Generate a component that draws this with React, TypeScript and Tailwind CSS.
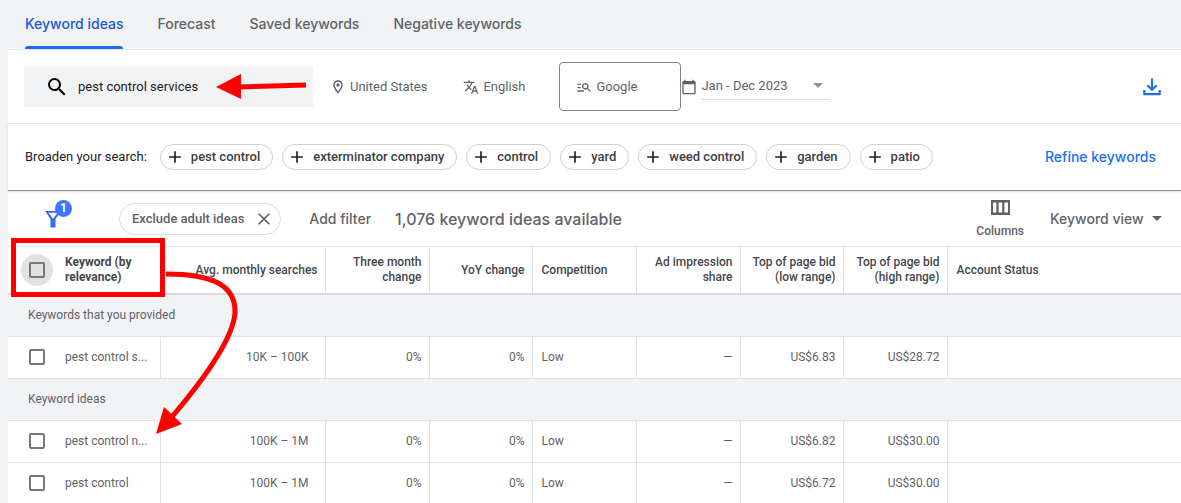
import type { ReactNode } from "react";
import {
  MdAdd,
  MdArrowDropDown,
  MdCalendarToday,
  MdClose,
  MdManageSearch,
  MdOutlineLocationOn,
  MdSearch,
  MdTranslate,
} from "react-icons/md";

const tabs = ["Keyword ideas", "Forecast", "Saved keywords", "Negative keywords"];

const suggestions = [
  "pest control",
  "exterminator company",
  "control",
  "yard",
  "weed control",
  "garden",
  "patio",
];

type Row = { keyword: string; searches: string; low: string; high: string };

const provided: Row[] = [
  { keyword: "pest control s...", searches: "10K – 100K", low: "US$6.83", high: "US$28.72" },
];

const ideas: Row[] = [
  { keyword: "pest control n...", searches: "100K – 1M", low: "US$6.82", high: "US$30.00" },
  { keyword: "pest control", searches: "100K – 1M", low: "US$6.72", high: "US$30.00" },
];

function Checkbox({ label }: { label: string }) {
  return (
    <input
      type="checkbox"
      aria-label={label}
      className="size-4 shrink-0 appearance-none rounded-xs border-2 border-[#75787c] checked:bg-[#1a73e8]"
    />
  );
}

function Setting({ icon, children }: { icon: ReactNode; children: ReactNode }) {
  return (
    <button type="button" className="flex items-center gap-1 text-[13px] text-[#5f6368]">
      {icon}
      {children}
    </button>
  );
}

function DownloadIcon() {
  return (
    <svg viewBox="0 0 18 18" className="size-[18px]" fill="none" stroke="currentColor" strokeWidth="2.2">
      <path d="M9 0.5v11M4.3 7.2 9 11.7l4.7-4.5" />
      <path d="M1.3 12v4.2h15.4V12" strokeLinejoin="round" />
    </svg>
  );
}

function FunnelIcon() {
  return (
    <svg viewBox="0 0 17 18" className="h-[18px] w-[17px]" fill="currentColor">
      <path fillRule="evenodd" d="M0 1h16L10.5 9V17.5H5.5V9ZM3.4 2.8 8 8.8l4.6-6Z" />
    </svg>
  );
}

function ColumnsIcon() {
  return (
    <svg viewBox="0 0 19 15" className="h-[15px] w-[19px]" fill="currentColor">
      <path fillRule="evenodd" d="M0 0h19v15H0ZM2 2.4v10.2h3.4V2.4ZM7.6 2.4v10.2h3.6V2.4ZM13.4 2.4v10.2H17V2.4Z" />
    </svg>
  );
}

function HeadCell({ children, left }: { children: ReactNode; left?: boolean }) {
  return (
    <th
      scope="col"
      className={
        "border-r border-[#e0e1e6] pl-[9px] pr-[7px] font-medium last:border-r-0 " +
        (left ? "text-left" : "text-right")
      }
    >
      {children}
    </th>
  );
}

function GroupRow({ title }: { title: string }) {
  return (
    <tr className="h-[42px] border-b border-[#e0e2e6] bg-[#f1f3f4]">
      <th colSpan={9} scope="rowgroup" className="pl-5 text-left font-normal">
        {title}
      </th>
    </tr>
  );
}

function DataRow({ row }: { row: Row }) {
  const cell = "border-r border-[#e0e1e6] pl-[9px] pr-[7px] text-right";
  return (
    <tr className="h-[42px] border-b border-[#e0e2e6] last:border-b-0">
      <td className="border-r border-[#e0e1e6] pl-[21px]">
        <div className="flex items-center gap-5">
          <Checkbox label={row.keyword} />
          <span className="whitespace-nowrap">{row.keyword}</span>
        </div>
      </td>
      <td className="border-r border-[#e0e1e6] pr-4 text-right">{row.searches}</td>
      <td className={cell}>0%</td>
      <td className={cell}>0%</td>
      <td className="border-r border-[#e0e1e6] pl-[9px] pr-[7px]">Low</td>
      <td className={cell}>—</td>
      <td className={cell}>{row.low}</td>
      <td className={cell}>{row.high}</td>
      <td />
    </tr>
  );
}

function Annotations() {
  return (
    <svg
      viewBox="0 0 320 450"
      className="pointer-events-none absolute left-0 top-0 h-[450px] w-[320px]"
      fill="none"
      stroke="#ff0000"
      strokeWidth="5"
      aria-hidden="true"
    >
      <rect x="13.5" y="240.5" width="149" height="54" />
      <path d="M306 85 238 87" />
      <path d="M216 87 241 74v25Z" fill="#ff0000" stroke="none" />
      <path d="M166 274C212 274 236 285 235 313C233 338 205 378 171 418" />
      <path d="M156 434 164 407 182 424Z" fill="#ff0000" stroke="none" />
    </svg>
  );
}

export default function App() {
  return (
    <div className="relative overflow-hidden bg-[#f1f3f4] pl-2 font-[family-name:Roboto,sans-serif] text-[#5f6368]">
      <nav className="flex gap-[34px] border-b border-[#e8eaed] pl-[17px] font-[family-name:Inter,sans-serif]">
        {tabs.map((tab, i) => (
          <button
            key={tab}
            type="button"
            className={
              "flex h-[49px] flex-col items-center text-sm font-medium " +
              (i === 0 ? "text-[#1a56db]" : "text-[#5f6368]")
            }
          >
            <span className="grow pt-[14px]">{tab}</span>
            {i === 0 && <span className="h-[3px] w-full rounded-t-sm bg-[#1a6af0]" />}
          </button>
        ))}
      </nav>

      <section className="flex h-[74px] items-center border-b border-[#e3e4e8] bg-white pl-4 pr-5">
        <label className="flex h-[41px] w-[289px] items-center gap-[9px] bg-[#f1f3f4] pl-[21px]">
          <MdSearch className="size-6 text-black" />
          <input
            type="text"
            aria-label="Keywords"
            defaultValue="pest control services"
            className="min-w-0 grow bg-transparent text-[13px] text-[#202124] outline-none"
          />
        </label>
        <div className="ml-[17px] flex items-center">
          <Setting icon={<MdOutlineLocationOn className="size-4" />}>United States</Setting>
          <div className="ml-9">
            <Setting icon={<MdTranslate className="size-4" />}>English</Setting>
          </div>
          <div className="ml-[34px] flex h-[49px] w-[122px] items-center rounded-sm border border-[#80868b] pl-4">
            <Setting icon={<MdManageSearch className="size-4" />}>Google</Setting>
          </div>
          <MdCalendarToday className="size-4" />
          <div className="relative ml-1 border-b border-[#dadce0]">
            <select
              aria-label="Date range"
              className="h-[26px] w-[129px] appearance-none bg-transparent text-[13px] outline-none"
            >
              <option>Jan - Dec 2023</option>
            </select>
            <MdArrowDropDown className="pointer-events-none absolute right-0 top-0 size-6 text-[#8d9094]" />
          </div>
        </div>
        <button type="button" aria-label="Download" className="ml-auto text-[#1a6ef5]">
          <DownloadIcon />
        </button>
      </section>

      <section className="relative flex h-[67px] items-center gap-[9px] border-b border-[#8f9195] bg-white pl-[17px] pr-[25px] shadow-sm">
        <span className="mr-1 text-[13px] text-[#202124]">Broaden your search:</span>
        {suggestions.map((s) => (
          <button
            key={s}
            type="button"
            className="flex h-[26px] items-center gap-[6px] rounded-full border border-[#cfd1d8] pl-1 pr-3 text-[13px] font-medium text-[#3c4043]"
          >
            <MdAdd className="size-5 text-[#202124]" />
            {s}
          </button>
        ))}
        <button
          type="button"
          className="ml-auto text-sm font-[family-name:Inter,sans-serif] font-medium text-[#1a6ef5]"
        >
          Refine keywords
        </button>
      </section>

      <section className="flex h-14 items-center border-b border-[#e3e4e8] bg-white pl-[37px] pr-4">
        <button type="button" aria-label="Filters, 1 applied" className="relative text-[#2f6df6]">
          <FunnelIcon />
          <span className="absolute -top-[10px] left-[10px] size-[17px] rounded-full bg-[#3c78ff] text-center text-xs font-bold leading-[17px] text-white">
            1
          </span>
        </button>
        <button
          type="button"
          className="ml-[57px] flex h-8 items-center gap-[10px] rounded-full border border-[#dadce0] pl-3 pr-[6px] text-[13px] font-medium"
        >
          Exclude adult ideas
          <MdClose className="size-5" />
        </button>
        <button type="button" className="ml-7 text-sm font-[family-name:Inter,sans-serif] font-medium">
          Add filter
        </button>
        <p className="ml-6 text-base font-[family-name:Inter,sans-serif] font-medium leading-5">
          1,076 keyword ideas available
        </p>
        <button
          type="button"
          className="ml-auto flex flex-col items-center gap-[10px] text-xs font-medium leading-3"
        >
          <ColumnsIcon />
          Columns
        </button>
        <div className="relative ml-[26px] font-[family-name:Inter,sans-serif]">
          <select
            aria-label="View"
            className="block h-6 w-[115px] appearance-none bg-transparent text-sm font-medium outline-none"
          >
            <option>Keyword view</option>
          </select>
          <MdArrowDropDown className="pointer-events-none absolute -right-1 -top-px size-6" />
        </div>
      </section>

      <table className="w-full table-fixed border-collapse bg-white text-xs">
        <colgroup>
          <col className="w-[152px]" />
          <col className="w-[165px]" />
          <col className="w-[104px]" />
          <col className="w-[103px]" />
          <col className="w-[104px]" />
          <col className="w-[104px]" />
          <col className="w-[103px]" />
          <col className="w-[104px]" />
          <col />
        </colgroup>
        <thead>
          <tr className="h-[47px] border-b-2 border-[#dadce3] leading-[15px] text-[#45484c]">
            <th scope="col" className="pl-[13px] text-left font-bold">
              <div className="flex items-center gap-3">
                <span className="flex size-8 shrink-0 items-center justify-center rounded-full bg-[#e2e2e2]">
                  <Checkbox label="Select all keywords" />
                </span>
                <span>
                  Keyword (by
                  <br />
                  relevance)
                </span>
              </div>
            </th>
            <HeadCell>Avg. monthly searches</HeadCell>
            <HeadCell>Three month change</HeadCell>
            <HeadCell>YoY change</HeadCell>
            <HeadCell left>Competition</HeadCell>
            <HeadCell>Ad impression share</HeadCell>
            <HeadCell>Top of page bid (low range)</HeadCell>
            <HeadCell>Top of page bid (high range)</HeadCell>
            <HeadCell left>Account Status</HeadCell>
          </tr>
        </thead>
        <tbody>
          <GroupRow title="Keywords that you provided" />
          {provided.map((row) => (
            <DataRow key={row.keyword} row={row} />
          ))}
          <GroupRow title="Keyword ideas" />
          {ideas.map((row) => (
            <DataRow key={row.keyword} row={row} />
          ))}
        </tbody>
      </table>

      <Annotations />
    </div>
  );
}
